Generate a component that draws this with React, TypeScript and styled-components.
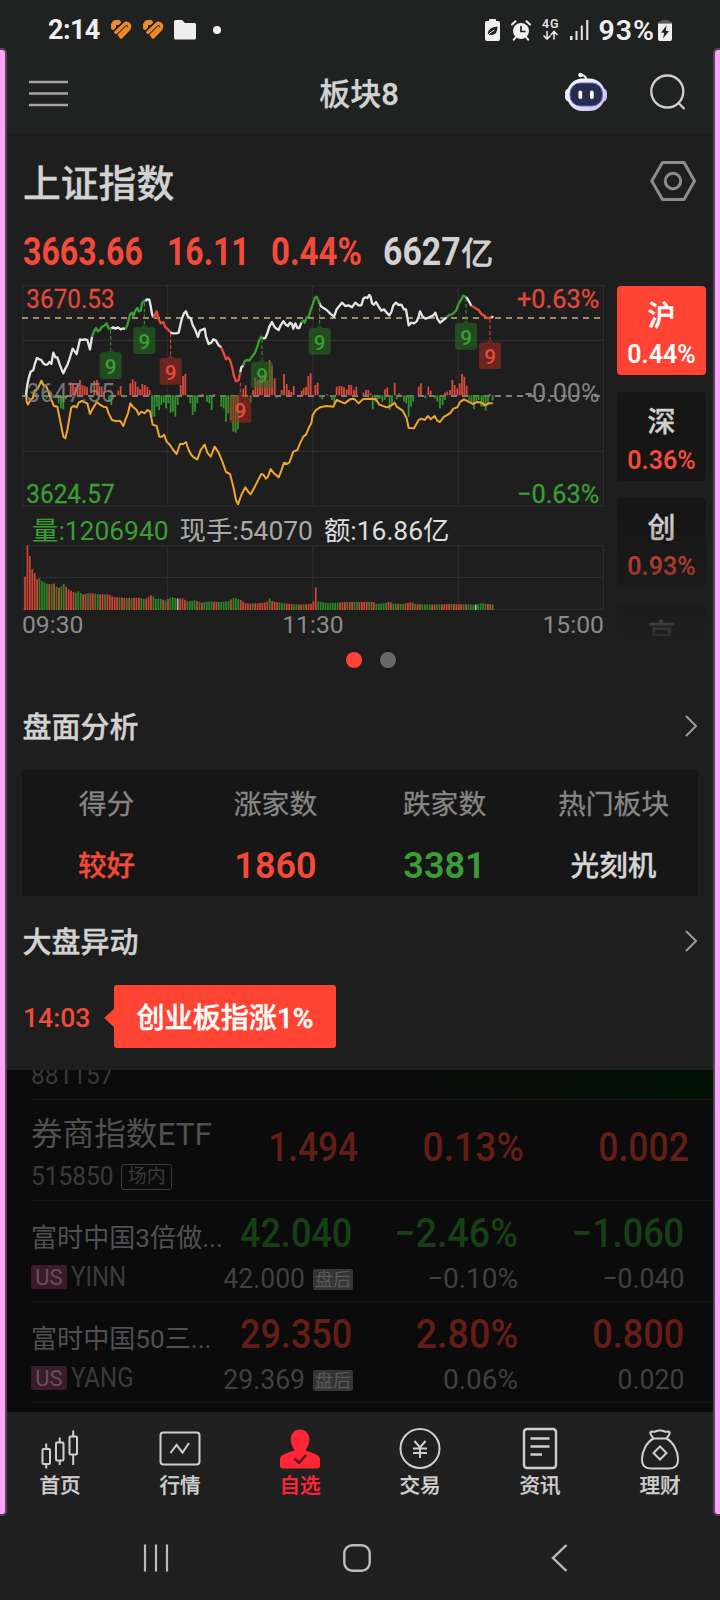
import React from 'react';
import styled, { createGlobalStyle } from 'styled-components';

const RED = '#ff4433';
const CHART_RED = '#e24a3c';
const GREEN = '#3a9e35';

const Global = createGlobalStyle`
  *, *::before, *::after { box-sizing: border-box; }
  body {
    margin: 0;
    background: #202121;
    color: #d2d2d2;
    font-family: Roboto, "Noto Sans CJK SC", sans-serif;
  }
`;

/* ---------- shell ---------- */

const Screen = styled.div`
  position: relative;
  width: 720px;
  height: 1600px;
  overflow: hidden;
  display: flex;
  flex-direction: column;
`;

const EdgeGlow = styled.div<{ $side: 'left' | 'right' }>`
  position: absolute;
  top: 48px;
  ${(p) => p.$side}: 0;
  width: 7px;
  height: 1468px;
  background: #fba6fb;
  border: 2px solid #5c405c;
  border-${(p) => p.$side}: 0;
  border-radius: ${(p) => (p.$side === 'left' ? '0 5px 5px 0' : '5px 0 0 5px')};
`;

const StatusBar = styled.div`
  flex: none;
  display: flex;
  align-items: center;
  height: 60px;
  padding: 0 48px 0 48px;
  color: #efefef;
`;

const Clock = styled.div`
  width: 62px;
  font-size: 27px;
  font-weight: 700;
  letter-spacing: -0.6px;
`;

const StatusIcons = styled.div<{ $gap: number; $end?: boolean }>`
  display: flex;
  align-items: center;
  gap: ${(p) => p.$gap}px;
  margin-left: ${(p) => (p.$end ? 'auto' : '0')};
`;

const Battery = styled.span`
  margin-left: 9px;
  margin-right: 3px;
  font-size: 28.5px;
  font-weight: 600;
  letter-spacing: 1px;
`;

const Header = styled.header`
  flex: none;
  display: grid;
  grid-template-columns: 1fr auto 1fr;
  align-items: center;
  height: 74px;
  padding: 0 33px 8px 29px;
`;

const HeaderTitle = styled.h1`
  margin: 3px -1px 0 1px;
  font-size: 31px;
  line-height: 40px;
  font-weight: 500;
  -webkit-text-stroke: 0.3px currentColor;
`;

const HeaderActions = styled.div`
  display: flex;
  justify-content: flex-end;
  align-items: center;
  gap: 43px;
  padding: 0 1px 3px 0;
`;

const Panel = styled.main`
  flex: none;
  height: 936px;
  padding: 23px 22px 0;
  background: #1e1e1e;
`;

/* ---------- index summary ---------- */

const IndexHead = styled.div`
  display: flex;
  justify-content: space-between;
  height: 58px;
  padding-right: 2px;
`;

const IndexName = styled.h2`
  margin: 0;
  padding-left: 1px;
  font-size: 37.8px;
  line-height: 54px;
  font-weight: 500;
  -webkit-text-stroke: 0.35px currentColor;
`;

const Quotes = styled.div`
  display: flex;
  height: 70px;
  padding-left: 1px;
  line-height: 75px;
`;

const Quote = styled.div<{ $w: number; $plain?: boolean }>`
  width: ${(p) => p.$w}px;
  color: ${(p) => (p.$plain ? '#d2d2d2' : '#f44a3a')};
  white-space: nowrap;
`;

const Num = styled.span<{ $size: number; $x?: number; $right?: boolean; $weight?: number }>`
  display: inline-block;
  font-size: ${(p) => p.$size}px;
  font-weight: ${(p) => p.$weight ?? 400};
  white-space: nowrap;
  transform: scaleX(${(p) => p.$x ?? 0.87});
  transform-origin: ${(p) => (p.$right ? 'right' : 'left')} center;
`;

const Unit = styled.span`
  margin-left: -9px;
  font-size: 32px;
  font-weight: 400;
  -webkit-text-stroke: 0.8px currentColor;
`;

const MarketArea = styled.section`
  display: flex;
  gap: 13px;
  height: 352px;
`;

const Charts = styled.div`
  flex: none;
  width: 582px;
  svg { display: block; overflow: visible; }
`;

const VolumeLegend = styled.div`
  display: flex;
  gap: 11px;
  height: 39px;
  padding-left: 10px;
  font-size: 26.4px;
  line-height: 50px;
  white-space: nowrap;
`;

const LegendItem = styled.span<{ $color: string }>`
  color: ${(p) => p.$color};
`;

const TimeAxis = styled.div`
  display: flex;
  justify-content: space-between;
  font-size: 24.7px;
  line-height: 30px;
  color: #8b8b8b;
`;

const IndexTabs = styled.div`
  flex: none;
  position: relative;
  width: 89px;
  height: 351px;
  padding-top: 1px;
  display: flex;
  flex-direction: column;
  gap: 17px;
  overflow: hidden;
`;

const TabFade = styled.div`
  position: absolute;
  inset: 235px 0 0;
  background: linear-gradient(rgba(30, 30, 30, 0), rgba(30, 30, 30, 0.93));
`;

const IndexTab = styled.div<{ $active?: boolean }>`
  flex: none;
  height: 89px;
  padding-top: 11px;
  border-radius: 4px;
  text-align: center;
  background: ${(p) => (p.$active ? RED : '#161616')};
  color: ${(p) => (p.$active ? '#fff' : '#d0d0d0')};
  font-size: 28px;
  line-height: 40px;
  font-weight: 500;
  -webkit-text-stroke: 0.35px currentColor;
`;

const TabChange = styled.div<{ $active?: boolean }>`
  font-size: 25px;
  line-height: 36px;
  font-weight: 600;
  color: ${(p) => (p.$active ? '#fff' : '#f44a3a')};
  -webkit-text-stroke: 0;
`;

const Pager = styled.div`
  display: flex;
  justify-content: center;
  gap: 18px;
  padding: 15px 0 0 22px;
  height: 53px;
`;

const Dot = styled.span<{ $active?: boolean }>`
  width: 16px;
  height: 16px;
  border-radius: 50%;
  background: ${(p) => (p.$active ? RED : '#686868')};
`;

/* ---------- sections ---------- */

const SectionHead = styled.div<{ $h: number; $bottom?: number }>`
  display: flex;
  align-items: center;
  justify-content: space-between;
  height: ${(p) => p.$h}px;
  padding-bottom: ${(p) => p.$bottom ?? 0}px;
`;

const SectionTitle = styled.h3`
  margin: 4px 0 0;
  padding-left: 0.5px;
  font-size: 29px;
  line-height: 40px;
  font-weight: 500;
  -webkit-text-stroke: 0.35px currentColor;
`;

const Breadth = styled.div`
  display: grid;
  grid-template-columns: repeat(4, 1fr);
  height: 126px;
  padding: 4px 0 0;
  background: #161616;
  text-align: center;
`;

const BreadthLabel = styled.div`
  font-size: 27.8px;
  line-height: 61px;
  color: #868686;
  -webkit-text-stroke: 0.3px currentColor;
`;

const BreadthValue = styled.div<{ $color: string; $numeric?: boolean }>`
  font-size: ${(p) => (p.$numeric ? 36 : 28.6)}px;
  line-height: 63px;
  font-weight: ${(p) => (p.$numeric ? 600 : 500)};
  color: ${(p) => p.$color};
  -webkit-text-stroke: ${(p) => (p.$numeric ? 0 : 0.3)}px currentColor;
`;

const AlertRow = styled.div`
  display: flex;
  align-items: center;
  height: 63px;
  padding-left: 1px;
`;

const AlertTime = styled.span`
  width: 91px;
  padding-top: 2px;
  font-size: 26.6px;
  font-weight: 500;
  color: #f44a3a;
`;

const AlertBubble = styled.div`
  position: relative;
  width: 222px;
  height: 63px;
  border-radius: 3px;
  background: ${RED};
  color: #fff;
  text-align: center;
  font-size: 28.1px;
  line-height: 68px;
  font-weight: 500;
  -webkit-text-stroke: 0.4px currentColor;
  &::before {
    content: '';
    position: absolute;
    left: -10px;
    top: 24px;
    border: 9px solid transparent;
    border-left: 0;
    border-right: 10px solid ${RED};
  }
`;

/* ---------- watch list behind the sheet ---------- */

const WatchList = styled.div`
  flex: none;
  height: 342px;
  overflow: hidden;
  background: #0b0b0b;
  color: #505050;
`;

const PartialRow = styled.div`
  height: 29px;
  padding-left: 31px;
  background: linear-gradient(90deg, #0b0b0b 55%, #001203);
  overflow: hidden;
  line-height: 11px;
  color: #383838;
`;

const Row = styled.div`
  height: 101px;
  margin-left: 31px;
  display: flex;
  border-top: 1px solid #141414;
`;

const NameCell = styled.div<{ $big?: boolean }>`
  width: ${(p) => (p.$big ? 193 : 188)}px;
  padding-top: ${(p) => (p.$big ? 8 : 15)}px;
  white-space: nowrap;
`;

const Name = styled.div<{ $big?: boolean }>`
  font-size: ${(p) => (p.$big ? 31.6 : 26.1)}px;
  line-height: ${(p) => (p.$big ? 54 : 44)}px;
`;

const SubLine = styled.div<{ $big?: boolean }>`
  display: flex;
  align-items: center;
  gap: ${(p) => (p.$big ? 6 : 4)}px;
  height: ${(p) => (p.$big ? 29 : 33)}px;
  font-size: 26px;
  color: #3a3a3a;
`;

const VenueTag = styled.span`
  width: 51px;
  height: 26px;
  border: 1px solid #3a3a3a;
  border-radius: 3px;
  font-size: 19px;
  line-height: 24px;
  text-align: center;
`;

const UsTag = styled.span`
  width: 36px;
  height: 24px;
  border-radius: 2px;
  background: #3c1a29;
  color: #66505a;
  font-size: 22px;
  line-height: 25px;
  text-align: center;
`;

const AfterTag = styled.span`
  width: 40px;
  height: 21px;
  margin-left: 8px;
  margin-right: -1px;
  border-radius: 2px;
  background: #353535;
  color: #595959;
  font-size: 18px;
  line-height: 21px;
  text-align: center;
`;

const Cell = styled.div<{ $w: number; $tone: 'up' | 'down'; $tall?: boolean }>`
  width: ${(p) => p.$w}px;
  padding-top: ${(p) => (p.$tall ? 20 : 4)}px;
  text-align: right;
  line-height: 56px;
  white-space: nowrap;
  color: ${(p) => (p.$tone === 'up' ? '#651d17' : '#173f16')};
`;

const After = styled.div`
  display: flex;
  justify-content: flex-end;
  align-items: center;
  height: 34px;
  margin-top: -8px;
  color: #404040;
`;

/* ---------- bottom bars ---------- */

const TabBar = styled.nav`
  flex: none;
  display: grid;
  grid-template-columns: repeat(6, 1fr);
  height: 103px;
  background: #202020;
`;

const NavItem = styled.div<{ $active?: boolean }>`
  display: flex;
  flex-direction: column;
  align-items: center;
  padding-top: 13px;
  color: ${(p) => (p.$active ? '#ff2736' : '#cfcfcf')};
  font-size: 20.6px;
  line-height: 30px;
  font-weight: 500;
  -webkit-text-stroke: 0.25px currentColor;
  svg { display: block; margin-bottom: -2px; }
`;

const SystemNav = styled.div`
  flex: none;
  display: grid;
  grid-template-columns: 312px 90px 1fr;
  justify-items: center;
  align-items: center;
  height: 85px;
  padding-right: 4px;
  background: #202020;
`;

/* ---------- chart data ---------- */

type Tone = 'w' | 'g' | 'r';

const priceSegments: [Tone, string][] = [
  ['w', '78,375 82,345 86,325 92,305 100,300 105,280 111,264 118,268 124,270 130,280 136,284 142,284 148,276 154,282 160,248 166,262 172,262 178,280 184,296 190,310 196,296 202,285 208,268 213,252 218,236 224,244 230,252 234,234 240,208 246,210 256,208 262,210 270,238 276,200'],
  ['g', '276,200 282,184 288,174 294,184 300,180 306,170 312,168 320,160 326,176 334,175'],
  ['w', '334,175 340,172 346,176 354,172 362,178 370,175 376,177'],
  ['g', '376,177 382,165 386,150 390,133 396,128 400,138 406,122 412,114 416,124 422,122 426,100 432,92 437,94'],
  ['w', '437,94 440,88 448,89 452,108 456,132 460,142'],
  ['r', '460,142 464,138 470,124 476,148 482,160 490,156 496,172 504,178 511,187'],
  ['w', '511,187 518,190 528,190 536,188 541,165 546,145 552,130 558,124 564,140 572,145 578,165 586,180 594,201 600,182 614,176 618,200 626,222 634,218 640,208 648,212 656,226 664,232'],
  ['r', '664,232 672,252 678,268 684,262 690,270 696,290 702,318 708,334 716,330 721,306'],
  ['w', '721,306 724,292 730,286'],
  ['g', '730,286 734,274 740,270 748,272 756,260 764,250 772,230 778,210 784,200 789,206'],
  ['w', '789,206 796,204 802,190 808,170 816,156 824,172 830,176 836,180 842,166 850,154 858,164 864,168 870,158 876,162 880,176 886,160 892,174 898,174 904,158'],
  ['g', '904,158 910,152 914,158 920,142 926,140 932,120 938,104 944,84 950,80 958,98'],
  ['w', '958,98 962,108 972,115 980,120 990,130 1002,140 1010,118 1018,108 1026,98 1036,108 1046,106 1056,112 1066,98 1076,106 1084,106 1090,86 1096,82 1102,84 1108,75 1112,80 1116,100 1122,104 1128,96 1136,110 1144,122 1152,118 1160,128 1168,136 1174,126 1180,106 1188,98 1196,105 1204,104 1212,118 1218,118 1222,142 1226,166 1234,158 1242,160 1250,154 1256,140 1260,124 1268,140 1276,146 1288,142 1300,136 1306,128 1312,146 1320,158 1330,150 1340,142'],
  ['g', '1340,142 1346,136 1358,132 1368,122 1376,102 1384,88 1390,77 1398,81'],
  ['w', '1398,81 1402,86 1408,96 1414,108'],
  ['r', '1414,108 1420,110 1428,116 1436,120 1444,132 1452,136 1460,144 1470,144 1474,140'],
  ['w', '1474,140 1480,143'],
];

const leadLine =
  '78,375 80,395 84,404 92,388 98,385 104,362 112,358 118,346 124,332 130,345 138,348 144,362 152,385 162,408 172,410 178,440 184,470 190,500 196,505 202,480 208,445 214,412 222,408 230,412 236,398 246,393 262,400 270,432 276,420 290,396 300,404 310,410 320,412 326,430 336,450 350,454 360,452 370,468 376,450 384,430 391,400 400,412 410,420 416,434 424,425 434,430 442,420 450,424 458,464 470,468 478,500 486,500 492,494 500,515 510,525 520,540 530,552 540,522 550,522 558,516 566,540 574,555 584,564 592,568 602,540 614,524 622,548 632,560 644,530 656,548 666,572 678,606 690,612 700,650 708,690 714,703 724,675 736,652 744,664 752,673 762,655 772,635 784,612 790,614 798,626 804,620 812,597 822,610 836,622 844,602 852,578 860,582 868,578 880,545 892,540 900,520 910,500 918,494 928,470 934,460 938,435 948,420 960,412 980,408 1000,410 1010,390 1020,394 1034,400 1050,388 1062,386 1076,400 1088,388 1110,386 1128,388 1138,404 1160,412 1172,408 1184,398 1190,410 1208,422 1220,445 1226,474 1242,475 1256,450 1264,446 1274,450 1284,438 1292,448 1304,438 1312,452 1320,456 1332,440 1340,436 1352,428 1360,416 1372,412 1380,396 1392,388 1404,394 1418,402 1432,396 1444,398 1456,406 1466,400 1478,400';

const upBars = '212,337 219,340 226,350 233,345 240,330 247,345 254,348 261,352 283,332 291,330 298,348 305,350 312,365 355,362 362,348 391,340 398,328 406,335 413,350 420,358 427,342 434,345 442,350 449,360 542,345 549,318 556,312 607,372 643,372 730,356 737,346 759,360 766,322 773,330 780,325 787,312 795,320 802,330 809,270 816,288 824,325 845,360 852,312 860,342 867,360 874,366 881,348 905,362 911,355 918,350 925,318 932,310 946,345 953,338 982,372 1010,350 1018,348 1025,348 1032,352 1040,358 1047,345 1054,345 1062,360 1069,350 1090,368 1098,360 1105,360 1112,370 1155,358 1162,352 1184,338 1198,370 1256,350 1263,340 1285,350 1292,362 1335,368 1342,365 1350,360 1357,330 1364,345 1372,355 1379,340 1386,312 1393,320 1400,347 1470,372';
const downBars = '140,385 162,384 176,400 183,415 190,418 197,388 327,395 334,405 370,382 377,382 456,440 463,440 470,410 477,420 484,405 491,398 498,415 505,400 512,428 519,425 526,440 533,405 571,400 578,435 585,425 592,400 621,395 628,400 635,420 664,410 671,415 678,455 685,430 693,450 700,485 707,488 714,478 752,397 831,384 960,382 967,388 996,390 1003,402 1118,418 1126,395 1133,388 1140,385 1147,395 1154,390 1169,420 1176,405 1190,388 1212,395 1219,400 1226,440 1233,410 1240,395 1276,385 1305,385 1312,395 1320,415 1328,405 1335,390 1408,392 1415,400 1422,418 1429,395 1436,390 1444,410 1450,410 1457,422 1464,398 1478,392';

const markers: { x: number; top: number; from: number; tone: 'g' | 'r' }[] = [
  { x: 332, top: 237, from: 180, tone: 'g' },
  { x: 433, top: 162, from: 98, tone: 'g' },
  { x: 512, top: 254, from: 190, tone: 'r' },
  { x: 786, top: 265, from: 208, tone: 'g' },
  { x: 721, top: 368, from: 338, tone: 'r' },
  { x: 959, top: 164, from: 96, tone: 'g' },
  { x: 1398, top: 149, from: 84, tone: 'g' },
  { x: 1470, top: 207, from: 148, tone: 'r' },
];

const volumeTops: [number, number][] = [
  [75, 215], [82, 120], [89, 150], [96, 190], [104, 204], [111, 222], [118, 219], [125, 228], [140, 236], [154, 238],
  [161, 234], [168, 244], [179, 250], [190, 235], [197, 243], [204, 252], [219, 260], [226, 264], [234, 258], [248, 268],
  [270, 264], [300, 268], [325, 268], [340, 276], [380, 279], [420, 278], [435, 283], [457, 268], [465, 282], [480, 280],
  [495, 287], [515, 276], [535, 281], [550, 280], [560, 289], [585, 286], [605, 293], [630, 289], [660, 291], [685, 288],
  [705, 277], [720, 284], [740, 296], [780, 294], [800, 292], [809, 280], [818, 289], [850, 295], [900, 299], [939, 296],
  [947, 245], [954, 289], [980, 294], [1010, 293], [1040, 291], [1080, 291], [1120, 290], [1130, 297], [1160, 294],
  [1169, 289], [1178, 296], [1210, 297], [1234, 291], [1245, 297], [1300, 299], [1350, 297], [1400, 298], [1430, 299],
  [1444, 294], [1460, 296], [1482, 299],
];
const volumeTones =
  'rrrrrrggggrgrgrggrrrrgggrrgrrggrrgrrrrrgrrgrgrrrggrrrggggrgrggg' +
  'wrrrggggrgrggggrrgggggrgggrrrrrgrrrrrrgrrrgggrrrggrrgrrrrrgggggg' +
  'gggrrrgrrggrrrrgrrgggggrrggrggrrrrgrrggggrrggrrrrgrrrrgrgggwggggrrg';
const toneColor: Record<Tone, string> = { w: '#e4e4e4', g: '#3a9e35', r: '#e8493b' };
const volumeColor: Record<Tone, string> = { w: '#b9b9b9', g: '#2c8526', r: '#cf4438' };

const pairs = (s: string) => s.split(' ').map((p) => p.split(',').map(Number));

function topAt(x: number) {
  const i = volumeTops.findIndex(([px]) => px >= x);
  if (i <= 0) return volumeTops[i === 0 ? 0 : volumeTops.length - 1][1];
  const [x0, y0] = volumeTops[i - 1];
  const [x1, y1] = volumeTops[i];
  return y0 + ((y1 - y0) * (x - x0)) / (x1 - x0);
}

function GridLines({ top, bottom }: { top: number; bottom: number }) {
  return (
    <g stroke="#2b2b2b" strokeWidth="4">
      <path d={`M68 ${top + 2}H1810V${bottom - 2}H68Z`} fill="none" />
      <path d={`M502 ${top}V${bottom}M938 ${top}V${bottom}M1375 ${top}V${bottom}`} />
    </g>
  );
}

function PriceChart() {
  const label = { fontSize: 80, lengthAdjust: 'spacingAndGlyphs' as const, strokeWidth: 0.8 };
  return (
    <svg width="582" height="221" viewBox="66 45 1746 663" fontFamily="Roboto">
      <GridLines top={45} bottom={710} />
      <path d="M66 211H1812M66 544H1812" stroke="#323232" strokeWidth="3" />
      <path d="M66 144H1812" stroke="#cbae84" strokeWidth="5" strokeDasharray="18 15" />
      <path d="M66 378H1812" stroke="#a0a0a0" strokeWidth="4" strokeDasharray="18 15" />
      {pairs(upBars).map(([x, y]) => (
        <rect key={x} x={x - 2.7} y={y} width="5.4" height={376 - y} fill="#d9493d" />
      ))}
      {pairs(downBars).map(([x, y]) => (
        <rect key={x} x={x - 2.7} y="376" width="5.4" height={y - 376} fill="#34912e" />
      ))}
      <polyline points={leadLine} fill="none" stroke="#f0a62e" strokeWidth="6" strokeLinejoin="round" />
      {priceSegments.map(([tone, pts]) => (
        <polyline key={pts} points={pts} fill="none" stroke={toneColor[tone]} strokeWidth="7" strokeLinejoin="round" />
      ))}
      {markers.map(({ x, top, from, tone }) => (
        <g key={x}>
          <path d={`M${x} ${from}V${top}`} stroke={toneColor[tone]} strokeWidth="3" strokeDasharray="11 7" />
          <path
            d={`M${x - 10} ${top + 10}L${x} ${top}L${x + 10} ${top + 10}H${x + 25}Q${x + 33} ${top + 11} ${x + 33} ${top + 19}V${top + 82}Q${x + 33} ${top + 90} ${x + 25} ${top + 90}H${x - 25}Q${x - 33} ${top + 90} ${x - 33} ${top + 82}V${top + 19}Q${x - 33} ${top + 11} ${x - 25} ${top + 10}Z`}
            fill={tone === 'g' ? 'rgba(38,110,34,.58)' : 'rgba(160,44,36,.58)'}
          />
          <text x={x} y={top + 75} fontSize="62" fontWeight="500" textAnchor="middle" fill={toneColor[tone]}>9</text>
        </g>
      ))}
      <text {...label} x="79" y="113" textLength="265" fill={CHART_RED} stroke={CHART_RED}>3670.53</text>
      <text {...label} x="79" y="395" textLength="265" fill="#858585" fillOpacity=".85">3647.55</text>
      <text {...label} x="79" y="699" textLength="265" fill={GREEN} stroke={GREEN}>3624.57</text>
      <text {...label} x="1551" y="113" textLength="247" fill={CHART_RED} stroke={CHART_RED}>+0.63%</text>
      <text {...label} x="1575" y="395" textLength="223" fill="#858585">-0.00%</text>
      <text {...label} x="1551" y="699" textLength="247" fill={GREEN} stroke={GREEN}>−0.63%</text>
    </svg>
  );
}

function VolumeChart() {
  return (
    <svg width="582" height="65" viewBox="66 120 1746 195">
      <GridLines top={120} bottom={315} />
      <path d="M66 217H1812" stroke="#323232" strokeWidth="3" />
      {volumeTones.split('').map((t, i) => {
        const x = 75 + i * 7.27;
        const y = topAt(x);
        return <rect key={i} x={x - 2.6} y={y} width="5.2" height={315 - y} fill={volumeColor[t as Tone]} />;
      })}
    </svg>
  );
}

/* ---------- icons ---------- */

const HeartIcon = () => (
  <svg width="22" height="20" viewBox="0 0 22 20" fill="none" strokeLinecap="round">
    <path d="M3.500 7.500V4.800Q4.500 1.800 8.500 2.500" stroke="#ee8a2c" strokeWidth="5" strokeLinejoin="round" />
    <path d="M6 12.300L14.300 4.200Q17 2.200 19 4.500Q20.500 7 18.300 9.500L11 17" stroke="#ee8a2c" strokeWidth="3.400" />
    <path d="M9 15L16.300 7.300" stroke="#ee8a2c" strokeWidth="2.600" />
    <path d="M7.700 14L15.300 6.300" stroke="#7a430f" strokeWidth="1.100" />
    <path d="M2.500 12L12.200 2.700" stroke="#202121" strokeWidth="1.300" />
  </svg>
);

const FolderIcon = () => (
  <svg width="22" height="20" viewBox="0 0 22 20" fill="#efefef">
    <path d="M1.500 0H8L11 3H20.500Q22 3 22 4.500V18Q22 19.500 20.500 19.500H1.500Q0 19.500 0 18V1.500Q0 0 1.500 0Z" />
  </svg>
);

const LeafBatteryIcon = () => (
  <svg width="15" height="22" viewBox="0 0 15 22">
    <path d="M4 2V.8Q4 0 5 0H10Q11 0 11 1V2H13Q15 2 15 4V20Q15 22 13 22H2Q0 22 0 20V4Q0 2 2 2Z" fill="#efefef" />
    <path d="M2.800 15Q3 8 12.500 7.500Q12.500 15.500 7 16Q4.500 16.200 2.800 15" fill="#202121" />
    <path d="M2 17.500Q4 13.500 9.500 11" fill="none" stroke="#efefef" strokeWidth="1" />
  </svg>
);

const AlarmIcon = () => (
  <svg width="20" height="21" viewBox="0 0 20 21" fill="none" stroke="#efefef" strokeLinecap="round">
    <circle cx="10" cy="11" r="8" fill="#efefef" stroke="none" />
    <path d="M1 4.500L4.500 1.200M19 4.500L15.500 1.200M4.500 17.500L2.800 19.700M15.500 17.500L17.200 19.700" strokeWidth="2" />
    <path d="M10 6.500V11.500H13.800" stroke="#202121" strokeWidth="1.700" />
  </svg>
);

const NetworkIcon = () => (
  <svg width="17" height="22" viewBox="0 0 17 22" fill="none" stroke="#e4e4e4" strokeWidth="1.600" overflow="visible">
    <text x="0" y="9" fontSize="12.500" fontWeight="600" fontFamily="Roboto" fill="#e4e4e4" stroke="none" textLength="16.500">4G</text>
    <path d="M5 12V20M1.500 16.500L5 20L8.500 16.500M12 20.500V12.500M8.800 16L12 12.500L15.500 16" />
  </svg>
);

const SignalIcon = () => (
  <svg width="19" height="20" viewBox="0 0 19 20" fill="#e4e4e4">
    <path d="M0 16H2.500V20H0ZM5.500 11H7.500V20H5.500ZM10.800 5.500H12.800V20H10.800ZM16.200 0H18.300V20H16.200Z" />
  </svg>
);

const ChargeIcon = () => (
  <svg width="14" height="21" viewBox="0 0 14 21">
    <path d="M3 1.500Q3 0 4.500 0H9.500Q11 0 11 1.500H12.500Q14 1.500 14 3.500H0Q0 1.500 1.500 1.500Z" fill="#5b5b5b" />
    <path d="M0 3.500H14V19Q14 21 12 21H2Q0 21 0 19Z" fill="#efefef" />
    <path d="M8.500 5.500L3 12.800H6.200L5 18.500L11 11H7.800Z" fill="#202121" />
  </svg>
);

const MenuIcon = () => (
  <svg width="39" height="27" viewBox="0 0 39 27" stroke="#a4a4a4" strokeWidth="2.400">
    <path d="M0 2H39M0 13.500H39M0 25H39" />
  </svg>
);

const RobotIcon = () => (
  <svg width="42" height="40" viewBox="0 0 42 40">
    <defs>
      <linearGradient id="shell" x1="0" y1="0" x2="1" y2="1">
        <stop offset="0" stopColor="#fff" />
        <stop offset=".5" stopColor="#e6e2fa" />
        <stop offset="1" stopColor="#c4bcf0" />
      </linearGradient>
    </defs>
    <path d="M21 8Q21.500 3.500 15.500 2.800" fill="none" stroke="#f2f2fb" strokeWidth="2" />
    <circle cx="15.500" cy="3" r="2.300" fill="#f4f4fb" />
    <rect x="0" y="16" width="10" height="14" rx="5" fill="#e9e6fb" />
    <rect x="32" y="16" width="10" height="14" rx="5" fill="#c9c3f2" />
    <rect x="2" y="6.500" width="38" height="32.500" rx="15.500" fill="url(#shell)" />
    <rect x="5" y="11" width="32.500" height="23" rx="10.500" fill="#262c50" stroke="#6a61c4" strokeWidth="1" />
    <rect x="13.500" y="18.500" width="3.700" height="8.500" rx="1.800" fill="#fff" />
    <rect x="25" y="18.500" width="3.700" height="8.500" rx="1.800" fill="#fff" />
  </svg>
);

const SearchIcon = () => (
  <svg width="36" height="36" viewBox="0 0 36 36" fill="none" stroke="#cfcfcf" strokeWidth="2.300">
    <circle cx="17.300" cy="17.500" r="16" />
    <path d="M28.500 29L34.500 35" />
  </svg>
);

const HexIcon = () => (
  <svg width="46" height="42" viewBox="0 0 46 42" fill="none" stroke="#8c8c8c" strokeWidth="3" strokeLinejoin="round">
    <path d="M1.800 21L12.500 2.500H34L44.500 21L34 39.500H12.500Z" />
    <circle cx="23" cy="21" r="7.700" />
  </svg>
);

const ChevronIcon = () => (
  <svg width="13" height="22" viewBox="0 0 13 22" fill="none" stroke="#9a9a9a" strokeWidth="2">
    <path d="M1 1L11 11L1 21" />
  </svg>
);

const navIcons: Record<string, React.ReactNode> = {
  首页: (
    <g>
      <rect x="3.500" y="22" width="7.500" height="15" rx="1" />
      <rect x="17" y="15.500" width="7.500" height="18" rx="1" />
      <rect x="30.500" y="9.500" width="7.500" height="18" rx="1" />
      <path d="M7.200 16.500V22M7.200 37V41.500M20.700 10.500V15.500M20.700 33.500V38M34.200 3.500V9.500M34.200 27.500V38" />
    </g>
  ),
  行情: (
    <g>
      <rect x="1.500" y="5.500" width="39" height="32" rx="3" />
      <path d="M11.500 26L17.500 18L23.500 25.500L30 16" />
    </g>
  ),
  自选: (
    <g stroke="none" fill="currentColor">
      <path d="M21 2.500C27 2.500 30.300 7 30.300 12.500C30.300 17.500 27.500 21.500 26.500 23.200C30 25.500 41 26.500 41 32V38.500Q41 41.500 37.500 41.500H4.500Q1 41.500 1 38.500V32C1 26.500 12 25.500 15.500 23.200C14.500 21.500 11.800 17.500 11.800 12.500C11.800 7 15 2.500 21 2.500Z" />
      <path d="M15.500 31.500L20 36L27 28" stroke="#5d1016" strokeWidth="2.500" fill="none" />
    </g>
  ),
  交易: (
    <g>
      <circle cx="21" cy="21.500" r="19.500" />
      <path d="M15.500 14L21 20.500L26.500 14M21 20.500V31M14 21.500H28M14 26H28" />
    </g>
  ),
  资讯: (
    <g>
      <rect x="5" y="2" width="32" height="39" rx="3" strokeWidth="2.400" />
      <path d="M11.500 11.500H30.500M11.500 19.500H30.500M11.500 27.500H23" strokeWidth="2.400" />
    </g>
  ),
  理财: (
    <g>
      <path d="M14.500 11.500C12 8 10 5.500 12.500 4.500C16 6 17 3 21 3.500C25 3 26 6 29.500 4.500C32 5.500 30 8 27.500 11.500Z" />
      <path d="M14.500 11.500C8 15 3 24 3 32C3 40 7 41.500 13 41.500H29C35 41.500 39 40 39 32C39 24 34 15 27.500 11.500" />
      <path d="M21 19.500L27.500 26L21 32.500L14.500 26Z" />
    </g>
  ),
};

/* ---------- screen ---------- */

const tabs = [
  { name: '沪', change: '0.44%', active: true },
  { name: '深', change: '0.36%' },
  { name: '创', change: '0.93%' },
  { name: '京', change: '' },
];

const usStocks = [
  { name: '富时中国3倍做...', code: 'YINN', tone: 'down' as const, v: ['42.040', '−2.46%', '−1.060'], after: ['42.000', '−0.10%', '−0.040'] },
  { name: '富时中国50三...', code: 'YANG', tone: 'up' as const, v: ['29.350', '2.80%', '0.800'], after: ['29.369', '0.06%', '0.020'] },
];
const columnWidth = [133, 166, 166];
const columnScale = [0.89, 0.93, 0.89];

export default function App() {
  return (
    <Screen>
      <Global />
      <StatusBar>
        <Clock>2:14</Clock>
        <StatusIcons $gap={10}>
          <HeartIcon />
          <HeartIcon />
          <FolderIcon />
          <svg width="30" height="10"><circle cx="11" cy="5" r="4" fill="#efefef" /></svg>
        </StatusIcons>
        <StatusIcons $gap={11} $end>
          <LeafBatteryIcon />
          <AlarmIcon />
          <NetworkIcon />
          <SignalIcon />
        </StatusIcons>
        <Battery>93%</Battery>
        <ChargeIcon />
      </StatusBar>
      <Header>
        <MenuIcon />
        <HeaderTitle>板块8</HeaderTitle>
        <HeaderActions>
          <RobotIcon />
          <SearchIcon />
        </HeaderActions>
      </Header>
      <Panel>
        <IndexHead>
          <IndexName>上证指数</IndexName>
          <svg width="46" height="48"><g transform="translate(0 3)"><HexIcon /></g></svg>
        </IndexHead>
        <Quotes>
          <Quote $w={144}><Num $size={38} $weight={700} $x={0.845}>3663.66</Num></Quote>
          <Quote $w={104}><Num $size={38} $weight={700} $x={0.84}>16.11</Num></Quote>
          <Quote $w={112}><Num $size={38} $weight={700} $x={0.87}>0.44%</Num></Quote>
          <Quote $w={120} $plain>
            <Num $size={38} $weight={700} $x={0.89}>6627</Num>
            <Unit>亿</Unit>
          </Quote>
        </Quotes>
        <MarketArea>
          <Charts>
            <PriceChart />
            <VolumeLegend>
              <LegendItem $color={GREEN}>量:1206940</LegendItem>
              <LegendItem $color="#a9a9a9">现手:54070</LegendItem>
              <LegendItem $color="#dedede">额:16.86亿</LegendItem>
            </VolumeLegend>
            <VolumeChart />
            <TimeAxis><span>09:30</span><span>11:30</span><span>15:00</span></TimeAxis>
          </Charts>
          <IndexTabs>
            {tabs.map((t) => (
              <IndexTab key={t.name} $active={t.active}>
                {t.name}
                <TabChange $active={t.active}>{t.change}</TabChange>
              </IndexTab>
            ))}
            <TabFade />
          </IndexTabs>
        </MarketArea>
        <Pager><Dot $active /><Dot /></Pager>
        <SectionHead $h={80} $bottom={9}><SectionTitle>盘面分析</SectionTitle><ChevronIcon /></SectionHead>
        <Breadth>
          <BreadthLabel>得分</BreadthLabel>
          <BreadthLabel>涨家数</BreadthLabel>
          <BreadthLabel>跌家数</BreadthLabel>
          <BreadthLabel>热门板块</BreadthLabel>
          <BreadthValue $color="#f44a3a">较好</BreadthValue>
          <BreadthValue $color="#f44a3a" $numeric>1860</BreadthValue>
          <BreadthValue $color={GREEN} $numeric>3381</BreadthValue>
          <BreadthValue $color="#d6d6d6">光刻机</BreadthValue>
        </Breadth>
        <SectionHead $h={89}><SectionTitle>大盘异动</SectionTitle><ChevronIcon /></SectionHead>
        <AlertRow>
          <AlertTime>14:03</AlertTime>
          <AlertBubble>创业板指涨1%</AlertBubble>
        </AlertRow>
      </Panel>
      <WatchList>
        <PartialRow><Num $size={25} $x={0.98}>881157</Num></PartialRow>
        <Row>
          <NameCell $big>
            <Name $big>券商指数ETF</Name>
            <SubLine $big><Num $size={25} $x={0.98}>515850</Num><VenueTag>场内</VenueTag></SubLine>
          </NameCell>
          <Cell $w={134} $tone="up" $tall><Num $size={40} $x={0.88} $right $weight={500}>1.494</Num></Cell>
          <Cell $w={166} $tone="up" $tall><Num $size={40} $x={0.93} $right $weight={500}>0.13%</Num></Cell>
          <Cell $w={165} $tone="up" $tall><Num $size={40} $x={0.89} $right $weight={500}>0.002</Num></Cell>
        </Row>
        {usStocks.map((s) => (
          <Row key={s.code}>
            <NameCell>
              <Name>{s.name}</Name>
              <SubLine><UsTag>US</UsTag><Num $size={27} $x={0.89}>{s.code}</Num></SubLine>
            </NameCell>
            {s.v.map((v, i) => (
              <Cell key={i} $w={columnWidth[i]} $tone={s.tone}>
                <Num $size={40.5} $x={columnScale[i]} $right $weight={500}>{v}</Num>
                <After>
                  <Num $size={28} $x={i === 1 ? 1 : 0.95} $right>{s.after[i]}</Num>
                  {i === 0 && <AfterTag>盘后</AfterTag>}
                </After>
              </Cell>
            ))}
          </Row>
        ))}
        <Row />
      </WatchList>
      <TabBar>
        {Object.entries(navIcons).map(([label, icon]) => (
          <NavItem key={label} $active={label === '自选'}>
            <svg width="42" height="48" viewBox="0 -2 42 48" fill="none" stroke="currentColor" strokeWidth="2">{icon}</svg>
            {label}
          </NavItem>
        ))}
      </TabBar>
      <SystemNav>
        <svg width="26" height="28" stroke="#bdbdbd" strokeWidth="2.200"><path d="M2 .500V27.500M13 .500V27.500M24 .500V27.500" /></svg>
        <svg width="28" height="28" fill="none" stroke="#bdbdbd" strokeWidth="2.400"><rect x="1.300" y="1.300" width="25.400" height="25.400" rx="8" /></svg>
        <svg width="17" height="28" fill="none" stroke="#bdbdbd" strokeWidth="2.400"><path d="M15.500 1L2 14L15.500 27" /></svg>
      </SystemNav>
      <EdgeGlow $side="left" />
      <EdgeGlow $side="right" />
    </Screen>
  );
}
